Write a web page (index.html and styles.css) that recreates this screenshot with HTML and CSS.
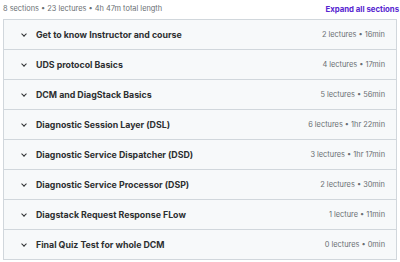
FILE: index.html
```html
<!DOCTYPE html>
<html lang="en">
<head>
    <meta charset="UTF-8">
    <meta name="viewport" content="width=device-width, initial-scale=1.0">
    <title>Course content</title>
    <link rel="stylesheet" href="styles.css">
</head>
<body>
    <div class="content">
        <div class="summary">
            <span>8 sections • 23 lectures • 4h 47m total length</span>
            <button class="expand">Expand all sections</button>
        </div>

        <div class="sections">
            <div class="section">
                <div class="title"><span class="chev"></span>Get to know Instructor and course</div>
                <span class="meta">2 lectures • 16min</span>
            </div>
            <div class="section">
                <div class="title"><span class="chev"></span>UDS protocol Basics</div>
                <span class="meta">4 lectures • 17min</span>
            </div>
            <div class="section">
                <div class="title"><span class="chev"></span>DCM and DiagStack Basics</div>
                <span class="meta">5 lectures • 56min</span>
            </div>
            <div class="section">
                <div class="title"><span class="chev"></span>Diagnostic Session Layer (DSL)</div>
                <span class="meta">6 lectures • 1hr 22min</span>
            </div>
            <div class="section">
                <div class="title"><span class="chev"></span>Diagnostic Service Dispatcher (DSD)</div>
                <span class="meta">3 lectures • 1hr 17min</span>
            </div>
            <div class="section">
                <div class="title"><span class="chev"></span>Diagnostic Service Processor (DSP)</div>
                <span class="meta">2 lectures • 30min</span>
            </div>
            <div class="section">
                <div class="title"><span class="chev"></span>Diagstack Request Response FLow</div>
                <span class="meta">1 lecture • 11min</span>
            </div>
            <div class="section">
                <div class="title"><span class="chev"></span>Final Quiz Test for whole DCM</div>
                <span class="meta">0 lectures • 0min</span>
            </div>
        </div>
    </div>
</body>
</html>
```

FILE: styles.css
```css
*{
    margin: 0;
    padding: 0;
    box-sizing: border-box;
}

body{
    background-color: #fff;
    font-family: "Inter", "Noto Sans", sans-serif;
    color: #2d2f31;
}

.content{
    padding: 0 3px;
}

.summary{
    display: flex;
    justify-content: space-between;
    align-items: center;
    height: 19px;
    font-size: 7.4px;
    color: #6a6f73;
    padding-left: 0;
    padding-bottom: 2px;
}

.expand{
    background: none;
    border: none;
    font-family: inherit;
    font-size: 7.8px;
    font-weight: 700;
    color: #5624d0;
    cursor: pointer;
    margin-right: -2px;
}

.sections{
    border: 1px solid #d1d7dc;
    border-bottom: none;
}

.section{
    display: flex;
    justify-content: space-between;
    align-items: center;
    height: 30px;
    background-color: #f7f9fa;
    border-bottom: 1px solid #d1d7dc;
    padding: 0 11px 0 17px;
}

.title{
    display: flex;
    align-items: center;
    font-size: 8.8px;
    font-weight: 700;
}

.chev{
    width: 4px;
    height: 4px;
    border-right: 1.3px solid #2d2f31;
    border-bottom: 1.3px solid #2d2f31;
    transform: rotate(45deg);
    margin: 0 10px 2px 1px;
}

.meta{
    font-size: 7.4px;
    color: #6a6f73;
}
```
